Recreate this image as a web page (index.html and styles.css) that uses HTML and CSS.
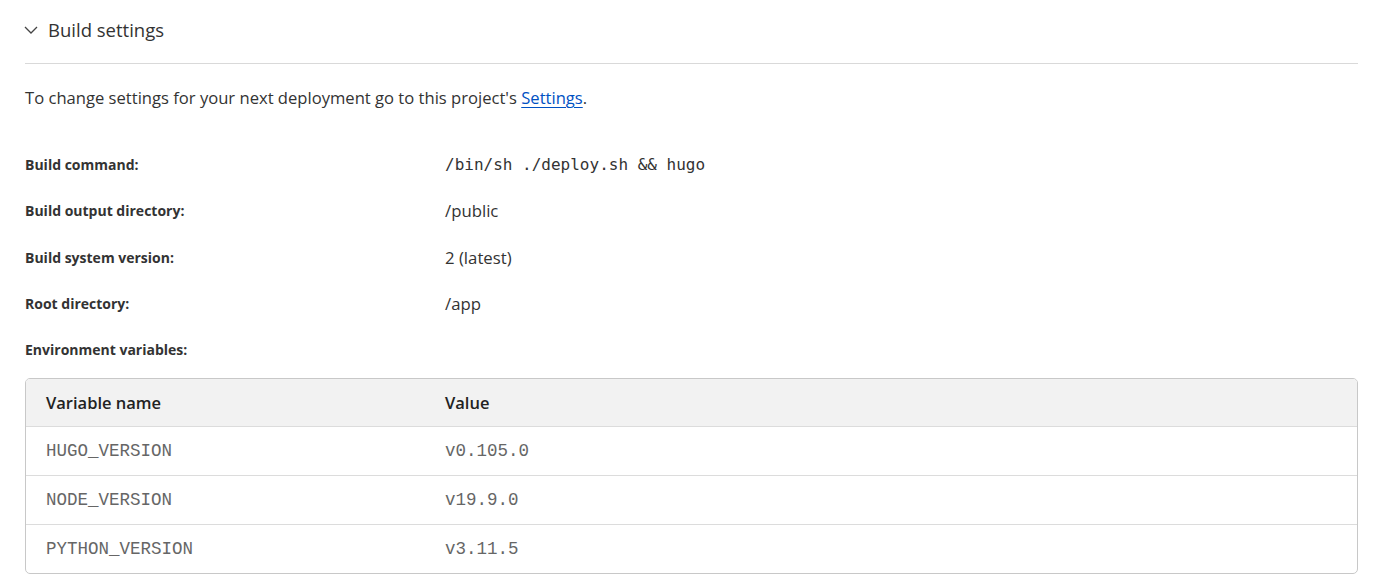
FILE: index.html
```html
<!DOCTYPE html>
<html>
<head>
<meta charset="utf-8">
<link rel="stylesheet" href="styles.css">
</head>
<body>
<section class="panel">
  <div class="panel-header">
    <svg class="chevron" width="14" height="8" viewBox="0 0 14 8"><path d="M1 1 L7 7 L13 1" fill="none" stroke="#444" stroke-width="1.3"/></svg>
    <h2 class="panel-title">Build settings</h2>
  </div>
  <div class="divider"></div>
  <p class="intro">To change settings for your next deployment go to this project's <a href="#" class="link">Settings</a>.</p>
  <dl class="settings">
    <div class="row"><dt>Build command:</dt><dd class="mono">/bin/sh ./deploy.sh &amp;&amp; hugo</dd></div>
    <div class="row"><dt>Build output directory:</dt><dd>/public</dd></div>
    <div class="row"><dt>Build system version:</dt><dd>2 (latest)</dd></div>
    <div class="row"><dt>Root directory:</dt><dd>/app</dd></div>
    <div class="row short"><dt>Environment variables:</dt><dd></dd></div>
  </dl>
  <div class="env-table">
    <div class="trow thead"><div class="cell">Variable name</div><div class="cell">Value</div></div>
    <div class="trow"><div class="cell code">HUGO_VERSION</div><div class="cell code">v0.105.0</div></div>
    <div class="trow"><div class="cell code">NODE_VERSION</div><div class="cell code">v19.9.0</div></div>
    <div class="trow last"><div class="cell code">PYTHON_VERSION</div><div class="cell code">v3.11.5</div></div>
  </div>
</section>
</body>
</html>
```
FILE: styles.css
```css
* { box-sizing: border-box; }
body {
  margin: 0;
  background: #fff;
  font-family: "Open Sans", "Noto Sans", sans-serif;
  color: #333;
}
.panel {
  width: 1358px;
  padding-left: 25px;
}
.panel-header {
  height: 58px;
  margin-bottom: 5px;
  display: flex;
  align-items: center;
  gap: 10px;
}
.chevron { display: block; margin-top: 2px; margin-left: -1px; }
.panel-title {
  margin: 0;
  font-size: 18.5px;
  font-weight: 400;
  color: #333;
}
.divider {
  height: 1px;
  background: #d9d9d9;
}
.intro {
  margin: 22px 0 31px;
  font-size: 16.6px;
  line-height: 24px;
  color: #333;
}
.link {
  color: #0051c3;
  text-decoration: underline;
  text-underline-offset: 3px;
}
.settings { margin: 0; }
.row {
  display: grid;
  grid-template-columns: 420px 1fr;
  height: 46.5px;
  align-items: center;
}
.row.short { height: 44px; }
.row dt {
  font-size: 14px;
  font-weight: 700;
  color: #333;
}
.row dd {
  margin: 0;
  font-size: 16.75px;
  color: #333;
}
.row dd.mono {
  font-family: "DejaVu Sans Mono", monospace;
  font-size: 16px;
}
.env-table {
  margin-top: 7px;
  border: 1px solid #c8c8c8;
  border-radius: 5px;
  overflow: hidden;
}
.trow {
  display: grid;
  grid-template-columns: 399px 1fr;
  height: 49px;
  align-items: center;
  border-bottom: 1px solid #dcdcdc;
}
.trow.last { border-bottom: none; height: 48px; }
.thead {
  background: #f2f2f2;
  height: 48px;
}
.cell {
  padding-left: 20px;
  font-size: 16.5px;
  font-weight: 600;
  color: #222;
}
.cell.code {
  font-family: "Liberation Mono", "Courier New", monospace;
  font-weight: 400;
  font-size: 17.5px;
  color: #666;
}
```
